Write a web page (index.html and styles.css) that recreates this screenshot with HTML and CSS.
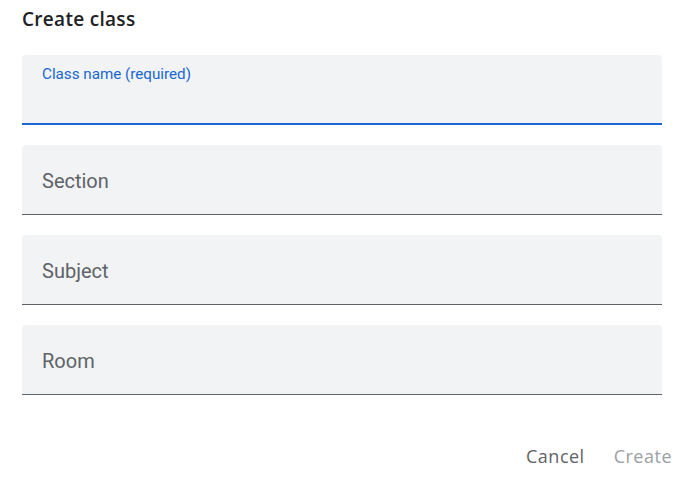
FILE: index.html
```html
<!DOCTYPE html>
<html>
<head>
<meta charset="utf-8">
<link rel="stylesheet" href="styles.css">
</head>
<body>
<div class="dialog">
  <h1 class="title">Create class</h1>
  <div class="fields">
    <div class="field field-active">
      <span class="label">Class name (required)</span>
    </div>
    <div class="field"><span class="placeholder">Section</span></div>
    <div class="field"><span class="placeholder">Subject</span></div>
    <div class="field"><span class="placeholder">Room</span></div>
  </div>
  <div class="actions">
    <button class="btn btn-cancel">Cancel</button>
    <button class="btn btn-create">Create</button>
  </div>
</div>
</body>
</html>
```
FILE: styles.css
```css
html, body {
  margin: 0;
  padding: 0;
  background: #ffffff;
}
.dialog {
  width: 688px;
  height: 478px;
  box-sizing: border-box;
  padding: 6px 8px 0 22px;
  font-family: Roboto, "Liberation Sans", sans-serif;
}
.title {
  margin: 0;
  font-family: "Open Sans", Roboto, sans-serif;
  font-weight: 600;
  font-size: 19px;
  letter-spacing: 0.3px;
  line-height: 26px;
  color: #202124;
}
.fields {
  margin-top: 23px;
  display: flex;
  flex-direction: column;
  gap: 20px;
  width: 640px;
}
.field {
  height: 70px;
  box-sizing: border-box;
  background: #f1f3f4;
  border-radius: 4px 4px 0 0;
  border-bottom: 1px solid #5f6368;
  padding: 0 20px;
  display: flex;
  align-items: center;
}
.field-active {
  border-bottom: 2px solid #1967d2;
  align-items: flex-start;
  padding-top: 11px;
}
.label {
  font-size: 15.2px;
  line-height: 17px;
  color: #1967d2;
}
.placeholder {
  font-size: 20px;
  line-height: 24px;
  color: #5f6368;
  padding-top: 3px;
}
.actions {
  display: flex;
  justify-content: flex-end;
  gap: 13px;
  margin-top: 43px;
}
.btn {
  border: none;
  background: none;
  font-family: "Open Sans", Roboto, sans-serif;
  font-weight: 500;
  font-size: 18px;
  letter-spacing: 0.5px;
  padding: 8px 8px;
  line-height: 20px;
}
.btn-cancel {
  color: #5f6368;
}
.btn-create {
  color: #9aa0a6;
}
```
